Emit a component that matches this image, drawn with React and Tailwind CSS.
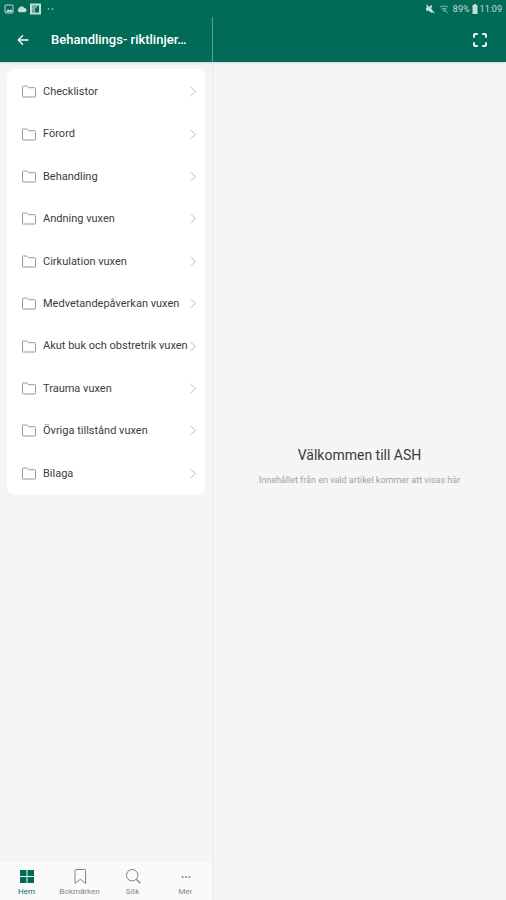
import React, { useState } from 'react'
import clsx from 'clsx'

const chapters = [
    'Checklistor',
    'Förord',
    'Behandling',
    'Andning vuxen',
    'Cirkulation vuxen',
    'Medvetandepåverkan vuxen',
    'Akut buk och obstretrik vuxen',
    'Trauma vuxen',
    'Övriga tillstånd vuxen',
    'Bilaga',
];

function FolderIcon() {
    return (
        <svg viewBox="0 0 16 14" className="h-3.5 w-4 shrink-0" fill="none" stroke="#999999" strokeWidth="1" strokeLinejoin="round">
            <path d="M1.5 11.500V1.800q0-.8.8-.8h3.500l1.800 1.700h6.100q.8 0 .8.8v8q0 .5-.6.5H2.100q-.6 0-.6-.5z" />
        </svg>
    )
}

function ChevronIcon() {
    return (
        <svg viewBox="0 0 8 12" className="h-3 w-2 shrink-0" fill="none" stroke="#b4b4b4" strokeWidth="0.9">
            <path d="M1.500 1 6.500 5.500l-5 4.500" />
        </svg>
    )
}

function StatusBar() {
    return (
        <div className="flex h-[17px] items-center justify-between pt-px pr-1 pl-1 text-[#c5ddd8]">
            <div className="flex items-center gap-[3px]">
                <svg viewBox="0 0 10 10" className="h-2.5 w-2.5" fill="none" stroke="currentColor">
                    <rect x="1" y="1" width="8" height="8" rx="1" />
                    <path d="m2 8 2-3 1.500 1.500L7 5l1.500 3z" fill="currentColor" stroke="none" />
                </svg>
                <svg viewBox="0 0 10 8" className="h-2 w-2.5" fill="currentColor">
                    <path d="M2.300 7.300A2.200 2.200 0 0 1 2 3.200 2.800 2.800 0 0 1 7.200 3 2.200 2.200 0 0 1 8 7.300z" />
                </svg>
                <svg viewBox="0 0 11 12" className="h-3 w-[11px]" fill="currentColor">
                    <path fillRule="evenodd" d="M0 .5h11v11H0zM2 2.500v7h7v-7z" />
                    <path d="M2 2.500h6.500L5 6 2 9z" opacity="0.6" />
                    <path d="M2 9.500 5 6v3.500z" opacity="0.7" />
                </svg>
                <svg viewBox="0 0 10 4" className="ml-0.5 h-1 w-2.5" fill="currentColor" opacity="0.7">
                    <circle cx="2.500" cy="2" r="0.9" />
                    <circle cx="6.500" cy="2" r="0.9" />
                </svg>
            </div>
            <div className="flex items-center gap-0.5 text-[9px] leading-none">
                <svg viewBox="0 0 10 10" className="h-2.5 w-2.5" fill="currentColor">
                    <path d="M1 3.300h2.200L7 1v8L3.200 6.700H1z" />
                    <path d="m1.500 1 7.500 8" stroke="currentColor" strokeWidth="1.200" />
                    <path d="M5.500 4 9 2.500v4z" fill="#006b57" />
                </svg>
                <svg viewBox="0 0 10 10" className="mx-0.5 h-2.5 w-2.5" fill="none" stroke="currentColor" opacity="0.7">
                    <path d="M1 3q4-2.500 8 0M2.500 5q2.500-1.600 5 0M4 7q1-.8 2 0M4.500 4.500l4 4.500" />
                </svg>
                <span>89%</span>
                <svg viewBox="0 0 6 10" className="h-2.5 w-1.5" fill="currentColor">
                    <path d="M2 0h2v1h1.500v9h-5V1H2z" />
                </svg>
                <span>11:09</span>
            </div>
        </div>
    )
}

const tabs = [
    {
        name: 'Hem',
        icon: (
            <g fill="currentColor" stroke="none">
                <rect x="1" y="2" width="6.500" height="6" />
                <rect x="8.500" y="2" width="6.500" height="6" />
                <rect x="1" y="9" width="6.500" height="6" />
                <rect x="8.500" y="9" width="6.500" height="6" />
            </g>
        ),
    },
    { name: 'Bokmärken', icon: <path d="M3 15.500V2.300q0-.8.8-.8h9q.8 0 .8.8v13.200l-5.300-4.200z" /> },
    {
        name: 'Sök',
        icon: (
            <>
                <circle cx="7.200" cy="7.200" r="5.700" />
                <path d="m11.300 11.300 4 4" strokeWidth="1.300" />
            </>
        ),
    },
    {
        name: 'Mer',
        icon: (
            <g fill="currentColor" stroke="none">
                <circle cx="4.500" cy="9" r="1" />
                <circle cx="8" cy="9" r="1" />
                <circle cx="11.500" cy="9" r="1" />
            </g>
        ),
    },
];

function TabBar() {
    const [active, setActive] = useState('Hem');

    return (
        <nav className="grid grid-cols-4 bg-[#fafafa] pt-1.5 pb-[3px]">
            {tabs.map(tab => (
                <button
                key={tab.name}
                type="button"
                onClick={() => setActive(tab.name)}
                className={clsx('flex flex-col items-center gap-[3px] text-[8px] leading-[10px]', active === tab.name ? 'text-[#006b57]' : 'text-[#858585]')}
                >
                    <svg viewBox="0 0 16 16" className="h-4 w-4" fill="none" stroke="currentColor" strokeWidth="1">
                        {tab.icon}
                    </svg>
                    {tab.name}
                </button>
            ))}
        </nav>
    )
}

function App() {
    return (
        <div className="flex min-h-screen flex-col bg-[#f5f5f5] font-['Roboto',sans-serif]">
            <header className="bg-[#006b57] shadow-sm">
                <StatusBar />
                <div className="grid h-[45px] grid-cols-[212fr_294fr] text-white">
                    <div className="flex min-w-0 items-center pl-4">
                        <button type="button" aria-label="Tillbaka" className="shrink-0">
                            <svg viewBox="0 0 14 14" className="h-3.5 w-3.5" fill="none" stroke="currentColor" strokeWidth="1.4">
                                <path d="M12.500 7H2.500M7 2.300 2.300 7 7 11.700" />
                            </svg>
                        </button>
                        <h1 className="ml-[21px] text-[13px] font-medium whitespace-nowrap">Behandlings- riktlinjer…</h1>
                    </div>
                    <div className="flex items-center justify-end border-l border-[#5f9f92] pr-[18px]">
                        <button type="button" aria-label="Helskärm">
                            <svg viewBox="0 0 16 16" className="h-4 w-4" fill="none" stroke="#e3f0ed" strokeWidth="2">
                                <path d="M2 5.800V3q0-1 1-1h2.800M10.200 2H13q1 0 1 1v2.800M14 10.200V13q0 1-1 1h-2.800M5.800 14H3q-1 0-1-1v-2.800" />
                            </svg>
                        </button>
                    </div>
                </div>
            </header>
            <div className="grid flex-1 grid-cols-[212fr_294fr]">
                <div className="flex min-w-0 flex-col justify-between">
                    <ul className="mx-[7px] mt-[7px] flex min-h-[426px] flex-col rounded-lg bg-white pt-0.5">
                        {chapters.map(chapter => (
                            <li key={chapter} className="flex flex-1">
                                <a href="#" className="flex min-w-0 flex-1 items-center pr-2 pl-3.5 text-[11px] text-[#3c3c3c]">
                                    <FolderIcon />
                                    <span className="ml-1.5 min-w-0 flex-1 whitespace-nowrap">{chapter}</span>
                                    <ChevronIcon />
                                </a>
                            </li>
                        ))}
                    </ul>
                    <TabBar />
                </div>
                <main className="flex flex-col items-center justify-center border-l border-[#e8e8e8] px-4 pb-[30px] text-center">
                    <h2 className="text-sm leading-5 text-[#3a3a3a]">Välkommen till ASH</h2>
                    <p className="mt-[7px] text-[9px] leading-4 text-[#a3a3a3]">Innehållet från en vald artikel kommer att visas här</p>
                </main>
            </div>
        </div>
    )
}

export default App
